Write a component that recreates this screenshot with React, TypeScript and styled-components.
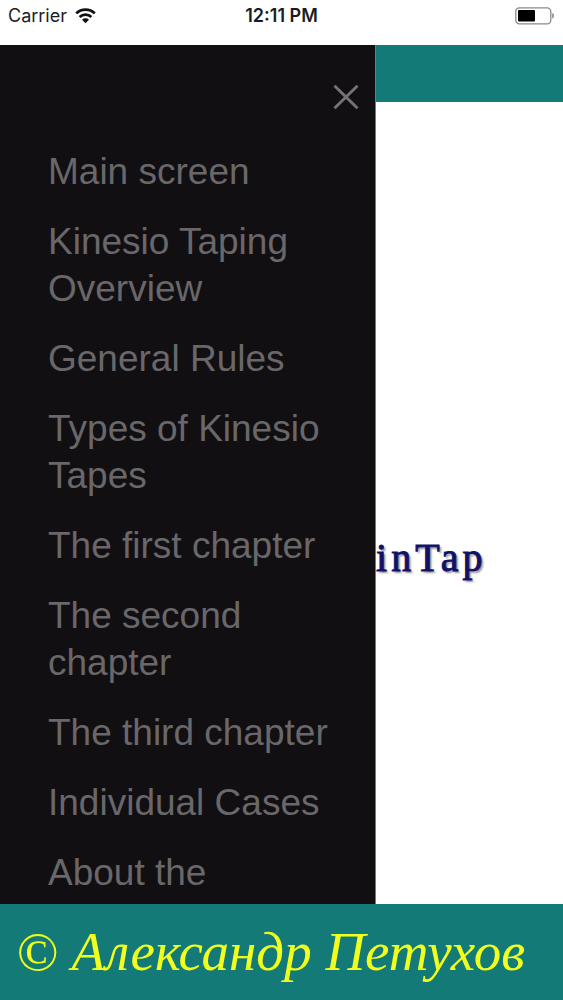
import React from "react";
import styled, { createGlobalStyle } from "styled-components";

const GlobalStyle = createGlobalStyle`
  *, *::before, *::after { box-sizing: border-box; }
  body { margin: 0; background: #fff; }
`;

const Screen = styled.div`
  display: flex;
  flex-direction: column;
  height: 100vh;
  overflow: hidden;
`;

const StatusBar = styled.div`
  display: grid;
  grid-template-columns: 1fr auto 1fr;
  align-items: center;
  flex: none;
  height: 45px;
  padding: 0 8px 14px 8px;
  background: #fff;
  color: #1c1c1e;
  font: 400 18px/20px Inter, "Liberation Sans", sans-serif;
`;

const Carrier = styled.div`
  display: flex;
  align-items: center;
  gap: 8px;
`;

const Clock = styled.time`
  font-weight: 600;
`;

const Battery = styled.svg`
  justify-self: end;
`;

const Body = styled.div`
  display: flex;
  flex: 1 1 0;
  min-height: 0;
`;

const Drawer = styled.nav`
  flex: none;
  display: flex;
  flex-direction: column;
  width: 66.8%;
  overflow: hidden;
  background: #110f12;
  border-right: 1px solid #77777a;
`;

const CloseButton = styled.button`
  align-self: flex-end;
  flex: none;
  display: flex;
  margin: 36px 13px 0 0;
  padding: 0;
  border: 0;
  background: none;
  color: #747275;
  cursor: pointer;
`;

const Menu = styled.ul`
  display: flex;
  flex-direction: column;
  gap: 23px;
  margin: 0;
  padding: 35px 30px 0 48px;
  list-style: none;
`;

const MenuLink = styled.a`
  display: block;
  color: #69676a;
  font: 400 37px/47px "Liberation Sans", Arial, sans-serif;
  text-decoration: none;
`;

const Page = styled.main`
  display: flex;
  flex-direction: column;
  flex: 1;
  min-width: 0;
`;

const Header = styled.header`
  flex: none;
  height: 57px;
  background: #147a77;
`;

const Splash = styled.div`
  display: flex;
  flex: 1;
  align-items: center;
  padding-top: 110px;
  overflow: hidden;
`;

const Brand = styled.h1`
  margin: 0;
  color: #11116a;
  font: 400 40px/48px "Liberation Serif", "Times New Roman", serif;
  letter-spacing: 4px;
  -webkit-text-stroke: 1px #11116a;
  text-shadow: 2px 2px 2px rgba(0, 0, 0, 0.45);
`;

const Footer = styled.footer`
  flex: none;
  height: 96px;
  padding: 0 16px;
  background: #147a77;
  color: #f0ff1e;
  font: italic 400 55px/96px "Liberation Serif", "Times New Roman", serif;
  white-space: nowrap;
`;

const items = [
  "Main screen",
  "Kinesio Taping Overview",
  "General Rules",
  "Types of Kinesio Tapes",
  "The first chapter",
  "The second chapter",
  "The third chapter",
  "Individual Cases",
  "About the",
];

export default function App() {
  return (
    <Screen>
      <GlobalStyle />
      <StatusBar>
        <Carrier>
          Carrier
          <svg width="21" height="16" viewBox="0 0 21 16" fill="none" stroke="#111" strokeWidth="2.7" aria-hidden="true">
            <path d="M1.2 5.4C6.4.3 14.6.3 19.8 5.4" />
            <path d="M4.6 9C8 5.9 13 5.9 16.4 9" />
            <path d="M7 11.7C9 9.9 12 9.9 14 11.7L10.5 15.3Z" fill="#111" stroke="none" />
          </svg>
        </Carrier>
        <Clock>12:11 PM</Clock>
        <Battery width="40" height="18" viewBox="0 0 40 18" aria-hidden="true">
          <rect x="0.8" y="0.8" width="35" height="16" rx="3.6" fill="none" stroke="#8a8a8c" strokeWidth="1.3" />
          <rect x="3" y="3" width="17" height="11.6" rx="1" fill="#000" />
          <path d="M37.2 6C39.6 6.8 39.6 10.8 37.2 11.6Z" fill="#8a8a8c" />
        </Battery>
      </StatusBar>
      <Body>
        <Drawer aria-label="Menu">
          <CloseButton type="button" aria-label="Close">
            <svg width="32" height="32" viewBox="0 0 32 32" fill="none" stroke="currentColor" strokeWidth="3">
              <path d="M4.5 4.8L27.5 27.2M27.5 4.8L4.5 27.2" />
            </svg>
          </CloseButton>
          <Menu>
            {items.map((label) => (
              <li key={label}>
                <MenuLink href="#">{label}</MenuLink>
              </li>
            ))}
          </Menu>
        </Drawer>
        <Page>
          <Header />
          <Splash>
            <Brand>inTap</Brand>
          </Splash>
        </Page>
      </Body>
      <Footer>© Александр Петухов</Footer>
    </Screen>
  );
}
